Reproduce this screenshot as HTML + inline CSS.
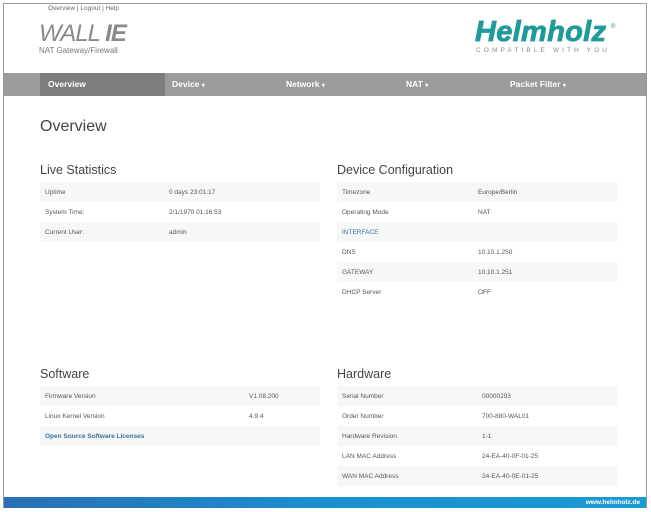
<!DOCTYPE html>
<html><head><meta charset="utf-8"><style>
*{margin:0;padding:0;box-sizing:border-box}
body{width:651px;height:512px;background:#fff;font-family:"Liberation Sans",Arial,sans-serif;position:relative;overflow:hidden}
.frame{position:absolute;left:3px;top:3px;width:644px;height:505px;border:1px solid #9a9a9a}
.abs{position:absolute}
.toplinks{left:48px;top:5px;font-size:6.5px;color:#666}
.wall{left:39px;top:22px;font-size:24px;font-style:italic;color:#8a8a8a;letter-spacing:-1px;line-height:24px}
.wall b{color:#8a8a8a;font-weight:bold}
.sub{left:39px;top:46px;font-size:8px;color:#777}
.helm{left:475px;top:17px;font-size:29px;font-weight:bold;font-style:italic;color:#1f9a9a;line-height:30px;letter-spacing:0.3px;-webkit-text-stroke:0.8px #1f9a9a}
.reg{left:611px;top:24px;font-size:6px;color:#1f9a9a}
.compat{left:476px;top:47px;font-size:6.5px;color:#888;letter-spacing:3.1px}
.nav{left:4px;top:73px;width:642px;height:23px;background:#9b9b9b}
.nav .act{position:absolute;left:36px;top:0;width:125px;height:23px;background:#7d7d7d}
.nav span{position:absolute;top:6px;font-size:8.5px;font-weight:bold;color:#fff}
.nav small{font-size:6px}
h1{position:absolute;left:40px;top:118px;font-size:16px;font-weight:normal;color:#444}
h2{position:absolute;font-size:12.5px;font-weight:normal;color:#444}
.tbl{position:absolute;width:280px}
.row{height:20px;font-size:6.5px;color:#555;position:relative}
.row:nth-child(odd){background:#f7f7f7}
.row span{position:absolute;top:7px}
.link{color:#3a6fa0;font-weight:bold}
.footer{left:4px;top:497px;width:642px;height:11px;background:linear-gradient(90deg,#2a6fb5,#1a8fd0 50%,#1a9ad4)}
.footer span{position:absolute;right:6px;top:2px;font-size:6.5px;color:#fff;font-weight:bold}
</style></head><body>
<div class="frame"></div>
<div class="abs toplinks">Overview | Logout | Help</div>
<div class="abs wall">WALL <b>IE</b></div>
<div class="abs sub">NAT Gateway/Firewall</div>
<div class="abs helm">Helmholz</div>
<div class="abs reg">®</div>
<div class="abs compat">COMPATIBLE WITH YOU</div>
<div class="abs nav"><div class="act"></div>
<span style="left:44px">Overview</span><span style="left:168px">Device <small>▾</small></span><span style="left:282px">Network <small>▾</small></span><span style="left:402px">NAT <small>▾</small></span><span style="left:506px">Packet Filter <small>▾</small></span></div>
<h1>Overview</h1>
<h2 style="left:40px;top:163px">Live Statistics</h2>
<div class="tbl" style="left:40px;top:182px">
<div class="row"><span style="left:5px">Uptime</span><span style="left:129px">0 days 23:01:17</span></div>
<div class="row"><span style="left:5px">System Time:</span><span style="left:129px">2/1/1970 01:16:53</span></div>
<div class="row"><span style="left:5px">Current User:</span><span style="left:129px">admin</span></div>
</div>
<h2 style="left:337px;top:163px">Device Configuration</h2>
<div class="tbl" style="left:337px;top:182px">
<div class="row"><span style="left:5px">Timezone</span><span style="left:141px">Europe/Berlin</span></div>
<div class="row"><span style="left:5px">Operating Mode</span><span style="left:141px">NAT</span></div>
<div class="row"><span style="left:5px;color:#3a6fa0">INTERFACE</span></div>
<div class="row"><span style="left:5px">DNS</span><span style="left:141px">10.10.1.250</span></div>
<div class="row"><span style="left:5px">GATEWAY</span><span style="left:141px">10.10.1.251</span></div>
<div class="row"><span style="left:5px">DHCP Server</span><span style="left:141px">OFF</span></div>
</div>
<h2 style="left:40px;top:367px">Software</h2>
<div class="tbl" style="left:40px;top:386px">
<div class="row"><span style="left:5px">Firmware Version</span><span style="left:209px">V1.08.200</span></div>
<div class="row"><span style="left:5px">Linux Kernel Version</span><span style="left:209px">4.9.4</span></div>
<div class="row"><span style="left:5px" class="link">Open Source Software Licenses</span></div>
</div>
<h2 style="left:337px;top:367px">Hardware</h2>
<div class="tbl" style="left:337px;top:386px">
<div class="row"><span style="left:5px">Serial Number</span><span style="left:145px">00000293</span></div>
<div class="row"><span style="left:5px">Order Number</span><span style="left:145px">700-880-WAL01</span></div>
<div class="row"><span style="left:5px">Hardware Revision</span><span style="left:145px">1-1</span></div>
<div class="row"><span style="left:5px">LAN MAC Address</span><span style="left:145px">24-EA-40-0F-01-25</span></div>
<div class="row"><span style="left:5px">WAN MAC Address</span><span style="left:145px">24-EA-40-0E-01-25</span></div>
</div>
<div class="abs footer"><span>www.helmholz.de</span></div>
</body></html>
